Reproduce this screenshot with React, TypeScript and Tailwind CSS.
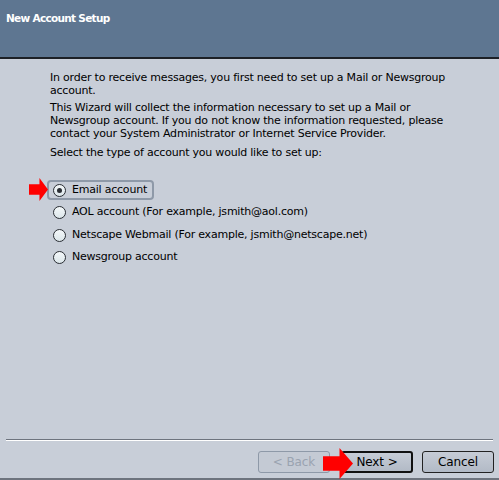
import React, { useState } from 'react'

const options = [
  { id: 'email', label: 'Email account' },
  { id: 'aol', label: 'AOL account (For example, jsmith@aol.com)' },
  { id: 'netscape', label: 'Netscape Webmail (For example, jsmith@netscape.net)' },
  { id: 'news', label: 'Newsgroup account' },
]

const RedArrow: React.FC<{ className: string; w: number; h: number }> = ({ className, w, h }) => (
  <svg className={className} width={w} height={h} viewBox={`0 0 ${w} ${h}`}>
    <polygon
      fill="#ff0000"
      points={`0,${h * 0.27} ${w * 0.55},${h * 0.27} ${w * 0.55},0 ${w},${h / 2} ${w * 0.55},${h} ${w * 0.55},${h * 0.73} 0,${h * 0.73}`}
    />
  </svg>
)

export default function App() {
  const [selected, setSelected] = useState('email')

  return (
    <div
      className="relative w-[499px] h-[480px] bg-[#c8ced8] text-[11px] text-black overflow-hidden flex flex-col"
      style={{ fontFamily: '"DejaVu Sans", sans-serif' }}
    >
      {/* Header */}
      <div className="h-[59px] shrink-0 bg-[#5e7691] border-b-2 border-[#1c2026] px-[6px] pt-[11px]">
        <span className="font-bold text-white text-[10.5px] tracking-[-0.7px]">New Account Setup</span>
      </div>

      {/* Body */}
      <div className="flex-1 pl-[50px] pr-[10px] pt-[13px] leading-[12.7px] tracking-[-0.22px]">
        <p>
          In order to receive messages, you first need to set up a Mail or Newsgroup
          <br />
          account.
        </p>
        <p className="mt-[5px]">
          This Wizard will collect the information necessary to set up a Mail or
          <br />
          Newsgroup account. If you do not know the information requested, please
          <br />
          contact your System Administrator or Internet Service Provider.
        </p>
        <p className="mt-[6px]">Select the type of account you would like to set up:</p>

        <div className="mt-[21px] -ml-[3px] flex flex-col gap-[2.4px]">
          {options.map((o) => {
            const on = selected === o.id
            return (
              <button
                key={o.id}
                type="button"
                onClick={() => setSelected(o.id)}
                className={`self-start h-[20px] flex items-center gap-[6px] pl-[4px] pr-[5px] rounded-[4px] border-2 ${
                  on ? 'border-[#8e99a8]' : 'border-transparent'
                }`}
              >
                <span className="w-[13px] h-[13px] rounded-full border border-[#2a2e34] bg-gradient-to-b from-[#f4f8fa] to-[#dce6ea] flex items-center justify-center">
                  {on && <span className="w-[5px] h-[5px] rounded-full bg-[#2a2e34]" />}
                </span>
                <span>{o.label}</span>
              </button>
            )
          })}
        </div>
      </div>

      {/* Footer */}
      <div className="shrink-0 pl-[6px] pr-[6px]">
        <div className="border-t border-[#6e747e] border-b border-b-white" />
        <div className="flex justify-end pt-[10px] pb-[5px] -mr-[1px] tracking-[-0.1px] text-[12px]">
          <button
            type="button"
            disabled
            className="w-[72px] h-[22px] rounded-[3px] border border-[#8e99a8] bg-[#c4cad4] text-[#9aa3b0]"
          >
            &lt; Back
          </button>
          <button
            type="button"
            className="ml-[11px] w-[72px] h-[22px] rounded-[3px] border-2 border-[#111] bg-gradient-to-b from-[#c6ccd6] to-[#b2bac6]"
          >
            Next &gt;
          </button>
          <button
            type="button"
            className="ml-[9px] w-[72px] h-[22px] rounded-[3px] border border-[#222] bg-gradient-to-b from-[#c6ccd6] to-[#b2bac6]"
          >
            Cancel
          </button>
        </div>
        <div className="h-[2px] -mx-[6px] bg-[#6e747e]" />
      </div>

      {/* Annotation arrows */}
      <RedArrow className="absolute left-[29px] top-[178px]" w={19} h={23} />
      <RedArrow className="absolute left-[323px] top-[448px]" w={30} h={31} />
    </div>
  )
}
